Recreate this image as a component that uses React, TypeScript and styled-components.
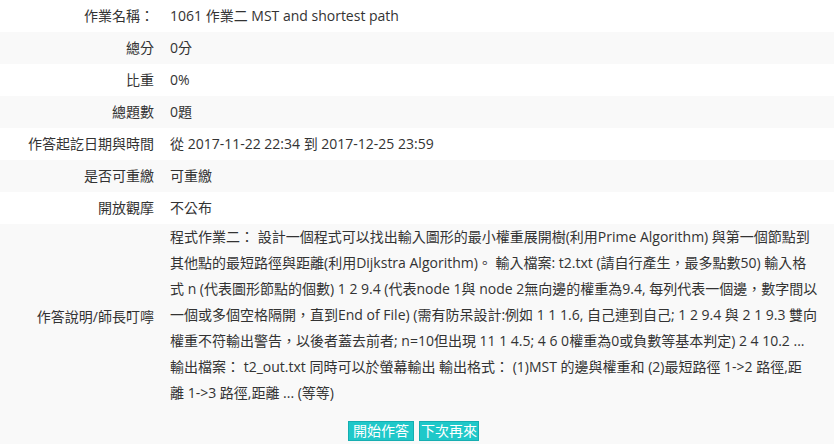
import React from "react";
import styled, { createGlobalStyle } from "styled-components";

const Global = createGlobalStyle`
  html, body { margin: 0; padding: 0; background: #fff; }
  body {
    font-family: "Open Sans", "Noto Sans CJK TC", sans-serif;
    font-size: 14px;
    color: #333;
  }
`;

const Table = styled.div`
  display: grid;
  grid-template-columns: 162px 1fr;
  width: 834px;
`;

const Row = styled.div<{ $striped?: boolean }>`
  display: contents;
  & > div {
    background: ${(p) => (p.$striped ? "#f9f9f9" : "#ffffff")};
  }
`;

const Label = styled.div`
  text-align: right;
  padding: 6px 8px 6px 0;
  line-height: 20px;
  display: flex;
  align-items: center;
  justify-content: flex-end;
  white-space: nowrap;
`;

const Value = styled.div`
  padding: 6px 10px 6px 8px;
  line-height: 20px;
`;

const Desc = styled.div`
  padding: 0 10px 4px 8px;
  line-height: 26px;
`;

const Line = styled.span`
  display: block;
  white-space: nowrap;
`;

const Buttons = styled.div`
  grid-column: 1 / -1;
  display: flex;
  justify-content: center;
  gap: 5px;
  padding: 11px 7px 8px 0;
`;

const Button = styled.button<{ $pad: number }>`
  font-family: "Open Sans", "Noto Sans CJK TC", sans-serif;
  font-size: 14px;
  line-height: 18px;
  color: #fff;
  background: #1fc8c9;
  border: 1px solid #16aeb1;
  padding: 0 ${(p) => p.$pad}px;
  border-radius: 0;
  margin: 0;
`;

const rows: [string, string][] = [
  ["作業名稱：", "1061 作業二 MST and shortest path"],
  ["總分", "0分"],
  ["比重", "0%"],
  ["總題數", "0題"],
  ["作答起訖日期與時間", "從 2017-11-22 22:34 到 2017-12-25 23:59"],
  ["是否可重繳", "可重繳"],
  ["開放觀摩", "不公布"],
];

const descLines = [
  "程式作業二： 設計一個程式可以找出輸入圖形的最小權重展開樹(利用Prime Algorithm) 與第一個節點到",
  "其他點的最短路徑與距離(利用Dijkstra Algorithm)。 輸入檔案: t2.txt (請自行產生，最多點數50) 輸入格",
  "式 n (代表圖形節點的個數) 1 2 9.4 (代表node 1與 node 2無向邊的權重為9.4, 每列代表一個邊，數字間以",
  "一個或多個空格隔開，直到End of File) (需有防呆設計:例如 1 1 1.6, 自己連到自己; 1 2 9.4 與 2 1 9.3 雙向",
  "權重不符輸出警告，以後者蓋去前者; n=10但出現 11 1 4.5; 4 6 0權重為0或負數等基本判定) 2 4 10.2 ...",
  "輸出檔案： t2_out.txt 同時可以於螢幕輸出 輸出格式： (1)MST 的邊與權重和 (2)最短路徑 1->2 路徑,距",
  "離 1->3 路徑,距離 ... (等等)",
];

export default function App() {
  return (
    <>
      <Global />
      <Table>
        {rows.map(([k, v], i) => (
          <Row key={k} $striped={i % 2 === 1}>
            <Label>{k}</Label>
            <Value>{v}</Value>
          </Row>
        ))}
        <Row $striped>
          <Label>作答說明/師長叮嚀</Label>
          <Desc>
            {descLines.map((l) => (
              <Line key={l}>{l}</Line>
            ))}
          </Desc>
        </Row>
        <Row $striped>
          <Buttons>
            <Button $pad={4}>開始作答</Button>
            <Button $pad={1}>下次再來</Button>
          </Buttons>
        </Row>
      </Table>
    </>
  );
}
